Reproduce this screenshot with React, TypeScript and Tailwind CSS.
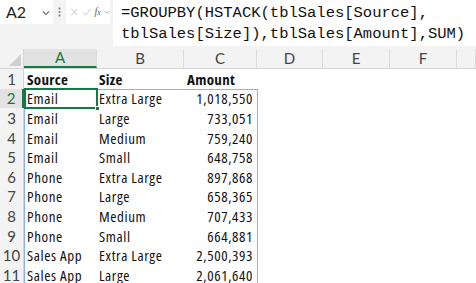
import React from "react";

const rows: [string, string, string][] = [
  ["Email", "Extra Large", "1,018,550"],
  ["Email", "Large", "733,051"],
  ["Email", "Medium", "759,240"],
  ["Email", "Small", "648,758"],
  ["Phone", "Extra Large", "897,868"],
  ["Phone", "Large", "658,365"],
  ["Phone", "Medium", "707,433"],
  ["Phone", "Small", "664,881"],
  ["Sales App", "Extra Large", "2,500,393"],
  ["Sales App", "Large", "2,061,640"],
];

const cols = [
  { l: "A", w: "w-[73px]" },
  { l: "B", w: "w-[87px]" },
  { l: "C", w: "w-[73px]" },
  { l: "D", w: "w-[66px]" },
  { l: "E", w: "w-[67px]" },
  { l: "F", w: "w-[67px]" },
  { l: "", w: "flex-1" },
];

const cellFont: React.CSSProperties = { fontFamily: "'Open Sans', Lato, sans-serif", fontStretch: "80%" };
const uiFont = { fontFamily: "Lato, 'Noto Sans', sans-serif" };

export default function App() {
  return (
    <div className="w-[476px] h-[283px] overflow-hidden bg-white relative" style={uiFont}>
      {/* formula bar */}
      <div className="h-[49px] bg-[#f3f3f3] flex items-start">
        <div className="w-[53px] h-[24px] bg-white flex items-center justify-between pl-[6px] pr-[3px] text-[16px] text-[#222]">
          <span>A2</span>
          <svg width="8" height="6" viewBox="0 0 8 6" className="mt-[1px]">
            <path d="M1 1.5 L4 4.5 L7 1.5" stroke="#777" strokeWidth="1.2" fill="none" />
          </svg>
        </div>
        <div className="w-[13px] h-[24px] flex items-center justify-center">
          <svg width="3" height="10" viewBox="0 0 3 10">
            <circle cx="1.5" cy="1.5" r="1" fill="#777" />
            <circle cx="1.5" cy="5" r="1" fill="#777" />
            <circle cx="1.5" cy="8.5" r="1" fill="#777" />
          </svg>
        </div>
        <div className="w-[44px] h-[24px] bg-white flex items-center pl-[4px] gap-[3px]">
          <svg width="10" height="10" viewBox="0 0 10 10">
            <path d="M1.5 1.5 L8.5 8.5 M8.5 1.5 L1.5 8.5" stroke="#c4c4c4" strokeWidth="1.1" fill="none" />
          </svg>
          <svg width="11" height="10" viewBox="0 0 11 10">
            <path d="M1 5.5 L4 8.5 L10 1.5" stroke="#c4c4c4" strokeWidth="1.1" fill="none" />
          </svg>
          <span className="text-[10px] italic text-[#666] leading-none" style={{ fontFamily: "'Liberation Serif', serif" }}>
            f<span className="text-[8px]">x</span>
          </span>
          <svg width="7" height="5" viewBox="0 0 7 5">
            <path d="M1 1 L3.5 3.5 L6 1" stroke="#999" strokeWidth="1" fill="none" />
          </svg>
        </div>
        <div
          className="ml-[3px] flex-1 h-[46px] bg-white pl-[8px] pt-[3px] text-[15.5px] leading-[21px] text-[#111]"
          style={{ fontFamily: "'Liberation Mono', monospace" }}
        >
          <div>=GROUPBY(HSTACK(tblSales[Source],</div>
          <div>tblSales[Size]),tblSales[Amount],SUM)</div>
        </div>
      </div>

      {/* column headers */}
      <div className="flex h-[20px] bg-[#f3f3f3] border-b border-[#d4d4d4]">
        <div className="w-[24px] h-full relative border-r border-[#d4d4d4]">
          <svg width="12" height="12" viewBox="0 0 12 12" className="absolute right-[2px] bottom-[2px]">
            <path d="M12 0 L12 12 L0 12 Z" fill="#d0d0d0" />
          </svg>
        </div>
        {cols.map((c, i) => (
          <div
            key={i}
            className={`${c.w} h-full flex items-center justify-center text-[15px] border-r border-[#dcdcdc] ${
              c.l === "A" ? "bg-[#e2e2e2] text-[#107c41] border-b-2 border-b-[#107c41]" : "text-[#444]"
            }`}
          >
            {c.l}
          </div>
        ))}
      </div>

      {/* grid */}
      <div className="relative">
        {[["Source", "Size", "Amount"] as [string, string, string], ...rows].map((r, i) => {
          const header = i === 0;
          const sel = i === 1;
          const tr = header ? "font-bold tracking-[0.3px]" : "tracking-[0.6px] font-medium";
          return (
            <div key={i} className="flex h-[19.6px] leading-[14px]">
              <div
                className={`w-[24px] shrink-0 flex items-center justify-center text-[15px] ${
                  sel ? "bg-[#e2e2e2] text-[#107c41] border-r-2 border-[#107c41]" : "bg-[#f3f3f3] text-[#444] border-r border-[#d4d4d4]"
                }`}
              >
                {i + 1}
              </div>
              <div style={cellFont} className={`w-[73px] shrink-0 flex items-center pl-[3px] text-[15px] text-[#111] ${tr}`}>
                {r[0]}
              </div>
              <div style={cellFont} className={`w-[87px] shrink-0 flex items-center pl-[2px] text-[15px] text-[#111] ${tr}`}>
                {r[1]}
              </div>
              <div
                style={cellFont}
                className={`w-[73px] shrink-0 flex items-center ${header ? "pl-[3px]" : "justify-end pr-[4px]"} text-[15px] text-[#111] ${tr}`}
              >
                {r[2]}
              </div>
            </div>
          );
        })}
        {/* spill range border */}
        <div className="absolute left-[24px] top-[19.6px] w-[234px] h-[240px] border border-[#8db3e2] pointer-events-none" />
        {/* selected cell */}
        <div className="absolute left-[24px] top-[19px] w-[74px] h-[21px] border-2 border-[#107c41] pointer-events-none">
          <div className="absolute -right-[4px] -bottom-[4px] w-[5px] h-[5px] bg-[#107c41] border border-white" />
        </div>
      </div>
    </div>
  );
}
